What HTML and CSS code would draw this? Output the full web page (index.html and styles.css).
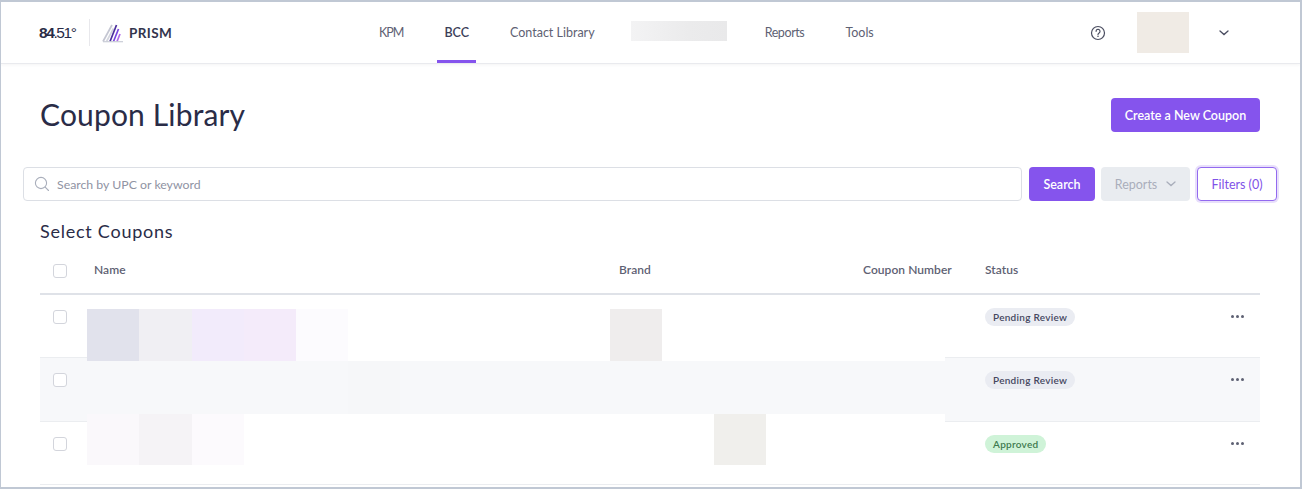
FILE: index.html
```html
<!DOCTYPE html>
<html lang="en">
<head>
<meta charset="utf-8">
<title>Coupon Library</title>
<link rel="stylesheet" href="styles.css">
</head>
<body>
<div class="frame">
  <header class="topbar">
    <div class="brand">
      <span class="logo-8451"><b class="logo-bold">84</b>.51°</span>
      <span class="brand-sep"></span>
      <svg class="prism-icon" width="22" height="20" viewBox="0 0 22 20" aria-hidden="true">
        <path d="M1 18.5 L10 2" stroke="#c4c6d2" stroke-width="1.7" fill="none"/>
        <path d="M4.5 18.5 L11.5 5.5" stroke="#d4d6de" stroke-width="1.7" fill="none"/>
        <path d="M8 18.5 L14.5 2" stroke="#4b2f9c" stroke-width="1.7" fill="none"/>
        <path d="M11.5 18.5 L16.5 6" stroke="#7a45e0" stroke-width="1.7" fill="none"/>
        <path d="M15 18.5 L18 11" stroke="#b06ae8" stroke-width="1.7" fill="none"/>
        <path d="M1 18.7 H21" stroke="#c9ccd6" stroke-width="1.2" fill="none"/>
      </svg>
      <span class="prism-word">PRISM</span>
    </div>
    <nav class="tabs">
      <a class="tab tab-kpm">KPM</a>
      <a class="tab tab-active">BCC</a>
      <a class="tab">Contact Library</a>
      <span class="tab"><span class="tab-blur"></span></span>
      <a class="tab tab-reports">Reports</a>
      <a class="tab">Tools</a>
    </nav>
    <div class="user">
      <svg class="help-icon" width="16" height="16" viewBox="0 0 16 16" aria-hidden="true">
        <circle cx="8" cy="8" r="6.5" fill="none" stroke="#4a4d60" stroke-width="1.2"/>
        <path d="M6.1 6.3a1.95 1.95 0 1 1 3 1.6c-.7.45-1.1.8-1.1 1.5" fill="none" stroke="#4a4d60" stroke-width="1.2" stroke-linecap="round"/>
        <circle cx="8" cy="11.3" r=".8" fill="#4a4d60"/>
      </svg>
      <span class="avatar"></span>
      <svg class="user-chevron" width="10" height="6" viewBox="0 0 10 6" aria-hidden="true">
        <path d="M1 1l4 3.6L9 1" fill="none" stroke="#4a4d60" stroke-width="1.3" stroke-linecap="round"/>
      </svg>
    </div>
  </header>

  <main class="page">
    <div class="title-row">
      <h1 class="title">Coupon Library</h1>
      <button class="btn btn-primary btn-create">Create a New Coupon</button>
    </div>

    <div class="search-row">
      <label class="search-box">
        <svg width="16" height="16" viewBox="0 0 16 16" aria-hidden="true">
          <circle cx="7" cy="7" r="5.6" fill="none" stroke="#a9aebb" stroke-width="1.1"/>
          <path d="M11.2 11.2l3.3 3.3" stroke="#a9aebb" stroke-width="1.1" stroke-linecap="round"/>
        </svg>
        <span class="placeholder">Search by UPC or keyword</span>
      </label>
      <button class="btn btn-primary btn-search">Search</button>
      <button class="btn btn-disabled">Reports
        <svg width="10" height="6" viewBox="0 0 10 6" aria-hidden="true">
          <path d="M1 1l4 3.6L9 1" fill="none" stroke="#a9aebb" stroke-width="1.3" stroke-linecap="round"/>
        </svg>
      </button>
      <button class="btn btn-filters">Filters (0)</button>
    </div>

    <h2 class="subtitle">Select Coupons</h2>

    <div class="table">
      <div class="row row-head">
        <span class="check"></span>
        <span>Name</span>
        <span>Brand</span>
        <span>Coupon Number</span>
        <span>Status</span>
      </div>
      <div class="row">
        <span class="check"></span><span></span><span></span><span></span>
        <span><span class="pill pill-pending">Pending Review</span></span>
        <span class="dots"><i></i><i></i><i></i></span>
      </div>
      <div class="row row-shaded">
        <span class="check"></span><span></span><span></span><span></span>
        <span><span class="pill pill-pending">Pending Review</span></span>
        <span class="dots"><i></i><i></i><i></i></span>
      </div>
      <div class="row">
        <span class="check"></span><span></span><span></span><span></span>
        <span><span class="pill pill-approved">Approved</span></span>
        <span class="dots"><i></i><i></i><i></i></span>
      </div>

      <div class="redaction">
        <i class="t t-a"></i><i class="t t-b"></i><i class="t t-c"></i><i class="t t-d"></i><i class="t t-e"></i>
        <i class="t t-brand"></i>
        <i class="t-band"><i class="band-soft"></i></i>
        <i class="t t-f"></i><i class="t t-g"></i><i class="t t-h"></i>
        <i class="t t-brand2"></i>
      </div>
    </div>
  </main>
</div>
</body>
</html>
```
FILE: styles.css
```css
* { box-sizing: border-box; }
html, body { margin: 0; padding: 0; height: 100%; background: #fff; }
body { font-family: Lato, "Open Sans", sans-serif; color: #2a2c47; overflow: hidden; }

.frame {
  height: 489px;
  border: 1px solid #c0c8d4;
  border-width: 2px 2px 2px 1px;
  overflow: hidden;
  background: #fff;
}

/* Top bar */
.topbar {
  height: 62px;
  display: flex;
  align-items: center;
  padding-left: 38px;
  border-bottom: 1px solid #e9eaee;
  box-shadow: 0 1px 3px rgba(30, 30, 60, .05);
}
.brand { display: flex; align-items: center; width: 333px; flex: none; }
.logo-8451 { font-family: "Liberation Sans", sans-serif; font-size: 15.5px; letter-spacing: -1.4px; color: #2a2c47; width: 50px; }
.logo-bold { font-weight: 700; }
.brand-sep { width: 1px; height: 27px; background: #e8e8ec; margin-right: 12px; }
.prism-icon { margin-right: 5px; }
.prism-word { font-size: 13.5px; font-weight: 700; letter-spacing: .4px; color: #33354d; }

.tabs { display: flex; gap: 27px; height: 61px; }
.tab {
  display: flex; align-items: center;
  padding: 3px 7px 0;
  font-size: 12.5px;
  color: #5e6173;
  border-bottom: 3px solid transparent;
}
.tab-kpm { letter-spacing: -1px; }
.tab-reports { letter-spacing: -.4px; }
.tab-active { color: #3c3e58; font-weight: 600; border-bottom-color: #8554ed; }
.tab-blur { display: block; width: 96px; height: 20px; margin: -4px -3px 0 -5px; background: linear-gradient(90deg, #f3f3f4, #ebebec 60%, #e9e9ea); }

.user { display: flex; align-items: center; margin-left: auto; height: 100%; padding-right: 71px; }
.help-icon { margin-right: 31px; }
.avatar { width: 52px; height: 41px; background: #f0ebe5; margin-right: 30px; }

/* Page */
.page { padding: 0 0 0 22px; position: relative; }
.title-row {
  display: flex; justify-content: space-between;
  padding: 34px 40px 0 17px;
  height: 103px;
  align-items: flex-start;
}
.title { margin: -1px 0 0; font-size: 30px; font-weight: 400; line-height: 34px; letter-spacing: .15px; color: #2a2c47; }
.btn {
  border: 0; border-radius: 4px; font-family: inherit; font-size: 12.5px; font-weight: 600;
  display: flex; align-items: center; justify-content: center;
}
.btn-primary { background: #8554ed; color: #fff; }
.btn-create { width: 149px; height: 34px; }

.search-row { display: flex; height: 34px; }
.search-box {
  width: 999px; border: 1px solid #dcdfe5; border-radius: 4px;
  display: flex; align-items: center; gap: 7px; padding-left: 10px;
}
.placeholder { font-size: 12.3px; color: #8f93a3; }
.btn-search { width: 66px; margin-left: 7px; }
.btn-disabled { width: 89px; margin-left: 6px; background: #e9ecf0; color: #a9aebb; font-weight: 400; gap: 9px; }
.btn-filters {
  width: 80px; margin-left: 7px; background: #fff; color: #7f52e8; font-weight: 400;
  border: 1px solid #936aef; box-shadow: 0 0 0 2px #e8dffb;
}

.subtitle { margin: 0; padding: 18px 0 0 17px; font-size: 18px; font-weight: 400; line-height: 24px; letter-spacing: .75px; color: #2a2c47; height: 49px; }

.table { position: relative; margin-left: 17px; width: 1220px; }
.row {
  display: grid;
  grid-template-columns: 54px 525px 244px 122px 1fr 30px;
  height: 63px;
  padding-top: 13px;
  border-bottom: 1px solid #ebedf0;
  font-size: 12px;
}
.row-head {
  height: 45px;
  border-bottom: 2px solid #dfe2e8;
  font-weight: 600;
  color: #5e6173;
  letter-spacing: .05px;
  line-height: 14px;
}
.row-shaded { background: #f7f8fa; height: 64px; }
.check {
  width: 14px; height: 14px; margin: 2px 0 0 13px;
  border: 1px solid #d3d5dc; border-radius: 3px; background: #fff;
}
.row-head .check { margin-top: 1px; }
.pill {
  display: inline-block; height: 18px; line-height: 18px; padding: 0 8px;
  border-radius: 9px; font-size: 10px; font-weight: 600; letter-spacing: .28px;
}
.pill-pending { background: #eaecf2; color: #45475f; }
.pill-approved { background: #cff3d8; color: #3d7a4e; }
.dots { display: flex; gap: 2px; margin: 7px 0 0 1px; height: 3px; }
.dots i { width: 3px; height: 3px; border-radius: 50%; background: #5e6173; }

/* Redacted cells lying over the table */
.redaction {
  position: absolute; left: 47px; top: 59px;
  width: 858px; height: 156px;
  background: #fff;
  display: grid;
  grid-template-columns: repeat(16, 52.25px) 22px;
  grid-template-rows: 52px 53px 51px;
}
.t { display: block; }
.t-a { background: #e1e2ec; }
.t-b { background: #f0eff3; }
.t-c { background: #f2ebfb; }
.t-d { background: #f4ebfa; }
.t-e { background: #fcfbfe; }
.t-brand { grid-column: 11; grid-row: 1; background: #efeded; }
.t-band { grid-column: 1 / -1; grid-row: 2; background: #f7f8fa; display: block; }
.band-soft { display: block; width: 52px; height: 100%; margin-left: 261px; background: #f6f7f9; }
.t-f { grid-row: 3; grid-column: 1; background: #faf8fb; }
.t-g { grid-row: 3; grid-column: 2; background: #f5f3f6; }
.t-h { grid-row: 3; grid-column: 3; background: #fcfafd; }
.t-brand2 { grid-row: 3; grid-column: 13; background: #f0efec; }
```
